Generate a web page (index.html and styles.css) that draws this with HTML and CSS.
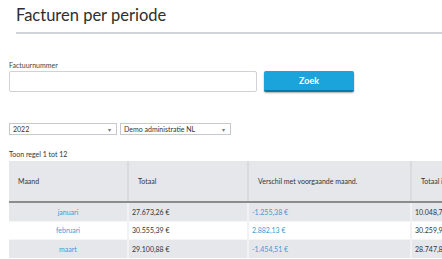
FILE: index.html
```html
<!DOCTYPE html>
<html lang="nl">
<head>
<meta charset="utf-8">
<title>Facturen per periode</title>
<link rel="stylesheet" href="styles.css">
</head>
<body>
<div class="page">
  <h1 class="title">Facturen per periode</h1>
  <div class="search">
    <label class="label" for="nr">Factuurnummer</label>
    <div class="search-row">
      <input class="input" id="nr" type="text">
      <button class="btn" type="button">Zoek</button>
    </div>
  </div>
  <div class="filters">
    <div class="select sel-year"><span>2022</span><span class="arrow">▾</span></div>
    <div class="select sel-admin"><span>Demo administratie NL</span><span class="arrow">▾</span></div>
  </div>
  <div class="info">Toon regel 1 tot 12</div>
  <table class="grid">
    <colgroup>
      <col class="c1"><col class="c2"><col class="c3"><col class="c4">
    </colgroup>
    <thead>
      <tr><th>Maand</th><th>Totaal</th><th>Verschil met voorgaande maand.</th><th>Totaal incl. btw</th></tr>
    </thead>
    <tbody>
      <tr class="odd"><td class="month"><a href="#">januari</a></td><td>27.673,26 €</td><td class="diff">-1.255,38 €</td><td>10.048,78 €</td></tr>
      <tr class="even"><td class="month"><a href="#">februari</a></td><td>30.555,39 €</td><td class="diff">2.882,13 €</td><td>30.259,99 €</td></tr>
      <tr class="odd"><td class="month"><a href="#">maart</a></td><td>29.100,88 €</td><td class="diff">-1.454,51 €</td><td>28.747,88 €</td></tr>
    </tbody>
  </table>
</div>
</body>
</html>
```
FILE: styles.css
```css
html, body { margin: 0; padding: 0; overflow: hidden; background: #fff; }
body { font-family: Lato, "Open Sans", sans-serif; color: #333; }
.page { padding: 0 0 0 9px; width: 560px; }
.title {
  margin: 0 0 0 7px;
  padding: 5px 0 7px 0;
  font-size: 16.5px;
  font-weight: 400;
  line-height: 20px;
  color: #2e2e2e;
  border-bottom: 2px solid #d0d4da;
}
.search { margin-top: 27px; }
.label { display: block; font-size: 7px; line-height: 8px; color: #444; margin-bottom: 2px; }
.search-row { display: flex; gap: 7px; align-items: flex-start; }
.input {
  width: 248px; height: 21px; box-sizing: border-box; margin: 0;
  border: 1px solid #cfd2d6; border-radius: 2px; background: #fff;
}
.btn {
  width: 90px; height: 21px; margin: 0; padding: 0;
  background: #1ba3dc; color: #fff; border: 0; border-bottom: 2px solid #0c78a8;
  border-radius: 2px; box-shadow: 0 1px 2px rgba(0,0,0,0.35);
  font-family: Lato, sans-serif; font-size: 9px; font-weight: 700;
}
.filters { display: flex; gap: 3px; margin-top: 31px; }
.select {
  box-sizing: border-box; height: 12px; display: flex; justify-content: space-between; align-items: center;
  border: 1px solid #c6c9cd; padding: 0 5px 0 3px; font-size: 7px; color: #333;
}
.sel-year { width: 108px; }
.sel-admin { width: 111px; }
.arrow { font-size: 6px; color: #777; }
.info { font-size: 7px; margin-top: 15px; line-height: 8px; color: #333; }
.grid { border-collapse: collapse; margin-top: 3px; table-layout: fixed; width: 520px; font-size: 7px; }
.c1 { width: 119px; } .c2 { width: 120px; } .c3 { width: 163px; } .c4 { width: 118px; }
.grid th {
  background: #e6e7eb; height: 41px; box-sizing: border-box; text-align: left; font-weight: 400;
  padding: 0 9px; border-left: 2px solid #dadbde; border-bottom: 2px solid #8c8c8c; color: #333;
}
.grid th:first-child { border-left: 0; }
.grid td { height: 17.5px; padding: 0 3px; border-left: 2px solid #f2f2f4; border-top: 1px solid #f5f5f6; }
.grid td:first-child { border-left: 0; }
.odd td { background: #e6e7eb; }
.even td { background: #fff; }
.month { text-align: center; }
.grid a, .diff { color: #3d9ad6; text-decoration: none; }
```
